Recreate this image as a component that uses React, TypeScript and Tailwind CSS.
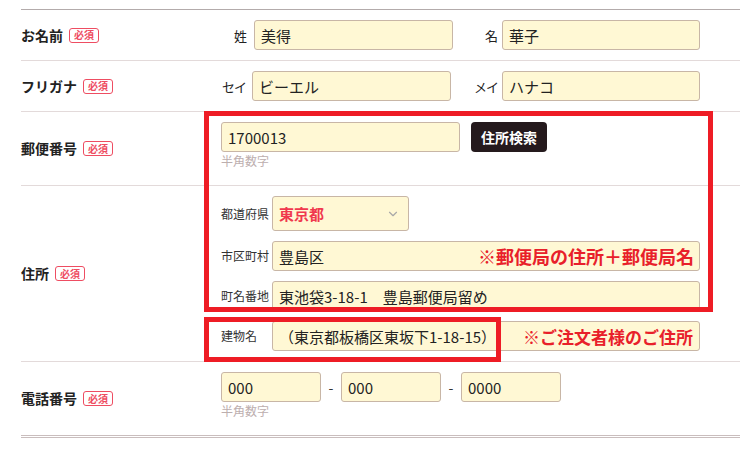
import { ChevronDown } from "lucide-react"
import type { ReactNode } from "react"

const font = { fontFamily: '"Noto Sans CJK JP", "Noto Sans", sans-serif' }

function Badge() {
  return (
    <span className="ml-[6px] inline-flex h-[15px] w-[30px] items-center justify-center rounded-[3px] border border-[#ee4d62] text-[10px] leading-none text-[#ee4d62]">
      必須
    </span>
  )
}

function Field({ value, className = "", children }: { value: string; className?: string; children?: ReactNode }) {
  return (
    <div
      className={
        "relative flex h-[30px] shrink-0 items-center rounded-[3px] border border-[#c8b6a6] bg-[#fff8d4] px-[6px] text-[15px] leading-none text-[#222] " +
        className
      }
    >
      <span className="whitespace-pre">{value}</span>
      {children}
    </div>
  )
}

function Row({ label, children, last }: { label: string; children: ReactNode; last?: boolean }) {
  return (
    <div
      className={
        "flex " +
        (last ? "border-b-[3px] border-double border-[#c9bdbd]" : "border-b border-[#e3dada]")
      }
    >
      <div className="flex w-[200px] shrink-0 items-center text-[14px] font-bold text-[#222]">
        {label}
        <Badge />
      </div>
      <div className="flex-1">{children}</div>
    </div>
  )
}

function Hint() {
  return <div className="text-[12px] leading-[18px] text-[#bcaeae]">半角数字</div>
}

// 姓・名などの小ラベル（右寄せ）
function Sub({ text, className }: { text: string; className: string }) {
  return <span className={"shrink-0 whitespace-nowrap text-right leading-none " + className}>{text}</span>
}

// 住所欄の小ラベル（左寄せ）
function AddrLabel({ text }: { text: string }) {
  return <span className="w-[51px] shrink-0 whitespace-nowrap leading-none">{text}</span>
}

export default function App() {
  return (
    <div className="relative h-[449px] w-[740px] overflow-hidden bg-white" style={font}>
      <div className="pl-[21px] pt-[9px]">
        <div className="w-[760px] border-t border-[#b3abab]">
          <Row label="お名前">
            <div className="flex items-center py-[10px] text-[13px] text-[#222]">
              <Sub text="姓" className="w-[33px] pr-[7px]" />
              <Field value="美得" className="w-[199px]" />
              <Sub text="名" className="w-[49px] pr-[4px]" />
              <Field value="華子" className="w-[198px]" />
            </div>
          </Row>

          <Row label="フリガナ">
            <div className="flex items-center py-[10px] text-[13px] text-[#222]">
              <Sub text="セイ" className="w-[31px] pr-[6px] tracking-[-1px]" />
              <Field value="ビーエル" className="w-[199px]" />
              <Sub text="メイ" className="w-[51px] pr-[4px] tracking-[-1px]" />
              <Field value="ハナコ" className="w-[198px]" />
            </div>
          </Row>

          <Row label="郵便番号">
            <div className="pb-[15px] pt-[10px]">
              <div className="flex items-center">
                <Field value="1700013" className="w-[239px]" />
                <button className="ml-[11px] flex h-[30px] w-[76px] items-center justify-center rounded-[4px] bg-[#251a1d] text-[14px] font-bold text-white">
                  住所検索
                </button>
              </div>
              <Hint />
            </div>
          </Row>

          <Row label="住所">
            <div className="flex flex-col gap-[10px] py-[10px] text-[12px] text-[#333]">
              <div className="flex items-center">
                <AddrLabel text="都道府県" />
                <div className="flex h-[35px] w-[137px] items-center justify-between rounded-[3px] border border-[#c8b6a6] bg-[#fff8d4] pl-[6px] pr-[8px]">
                  <span className="text-[15px] font-bold leading-none text-[#f0384e]">東京都</span>
                  <ChevronDown size={14} strokeWidth={2} className="text-[#a8a8a8]" />
                </div>
              </div>
              <div className="flex items-center">
                <AddrLabel text="市区町村" />
                <Field value="豊島区" className="w-[428px]">
                  <span className="absolute right-[5px] top-1/2 -translate-y-1/2 text-[18px] font-bold leading-none text-[#e8202a]">
                    ※郵便局の住所＋郵便局名
                  </span>
                </Field>
              </div>
              <div className="flex items-center">
                <AddrLabel text="町名番地" />
                <Field value="東池袋3-18-1　豊島郵便局留め" className="w-[428px]" />
              </div>
              <div className="flex items-center">
                <AddrLabel text="建物名" />
                <Field value="（東京都板橋区東坂下1-18-15）" className="w-[428px]">
                  <span className="absolute right-[6px] top-1/2 -translate-y-1/2 text-[17px] font-bold leading-none text-[#e8202a]">
                    ※ご注文者様のご住所
                  </span>
                </Field>
              </div>
            </div>
          </Row>

          <Row label="電話番号" last>
            <div className="pb-[15px] pt-[10px]">
              <div className="flex items-center text-[14px] text-[#333]">
                <Field value="000" className="w-[100px]" />
                <span className="w-[20px] text-center">-</span>
                <Field value="000" className="w-[100px]" />
                <span className="w-[20px] text-center">-</span>
                <Field value="0000" className="w-[100px]" />
              </div>
              <Hint />
            </div>
          </Row>
        </div>
      </div>

      {/* 赤枠の注記 */}
      <div className="pointer-events-none absolute left-[204px] top-[111px] h-[201px] w-[509px] border-[5px] border-[#ee1c25]" />
      <div className="pointer-events-none absolute left-[204px] top-[317px] h-[45px] w-[297px] border-[5px] border-[#ee1c25]" />
    </div>
  )
}
